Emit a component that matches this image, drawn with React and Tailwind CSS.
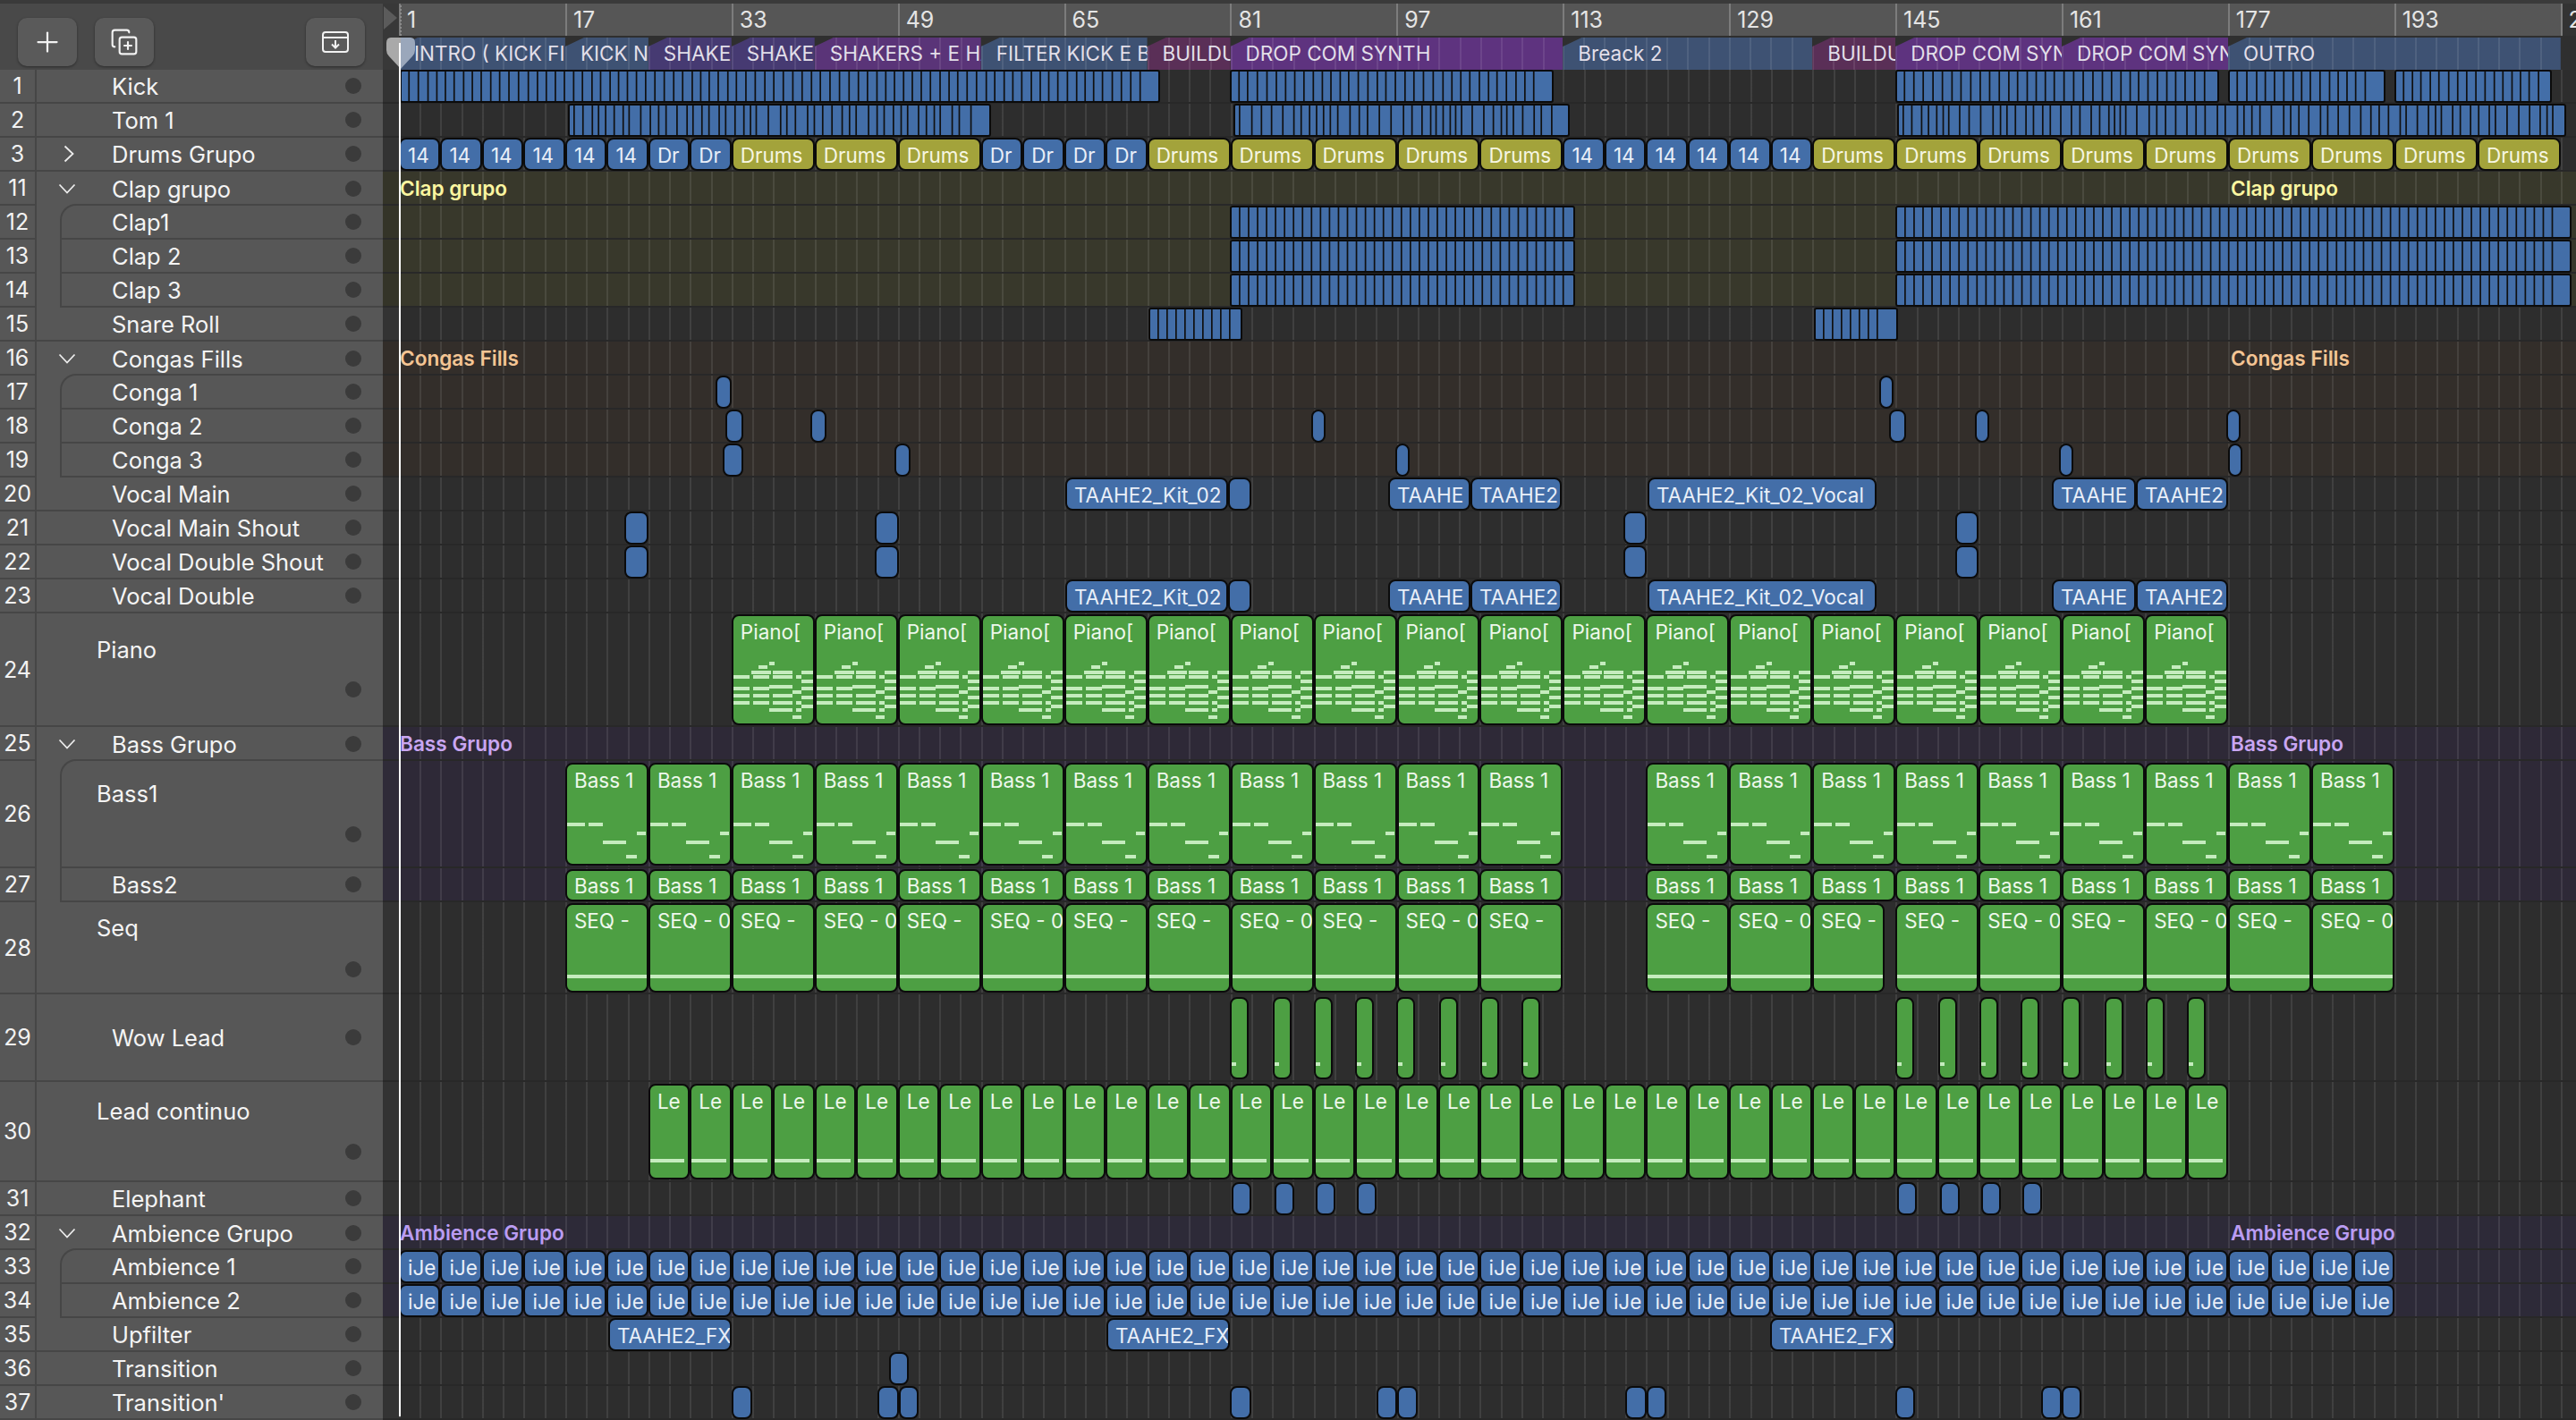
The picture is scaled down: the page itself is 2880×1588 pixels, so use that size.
import { CopyPlus, Plus } from 'lucide-react';

const BAR = 11.62;
const ORIGIN = 446;
const barX = (bar) => (bar - 1) * BAR;

const GRID =
  'bg-[repeating-linear-gradient(90deg,#ffffff17_0,#ffffff17_2px,transparent_2px,transparent_23.24px)]';

const BLUE = 'bg-[#436ea8] text-[#e9eff8]';
const GREEN = 'bg-[#4d9f43] text-[#eef8ec]';
const OLIVE = 'bg-[#a3a33b] text-[#f6f6e2]';

// seeded so the divider lines in the long clips stay the same between renders
function dividers(width, min, max, seed) {
  const out = [];
  let x = min;
  let s = seed;
  while (x < width - 14) {
    out.push(x);
    s = (s * 9301 + 49297) % 233280;
    x += min + (s / 233280) * (max - min);
  }
  return out;
}

const span = (x0, x1, label, color = BLUE, extra = {}) => ({ x0: x0 - ORIGIN, x1: x1 - ORIGIN, label, color, ...extra });
const bars = (bar, n, each, label, color = BLUE, extra = {}) =>
  Array.from({ length: n }, (_, i) => {
    const x = barX(bar + i * each);
    return { x0: x, x1: x + each * BAR, label, color, ...extra };
  });
const seg = (x0, x1, min, max, seed) => ({
  x0: x0 - ORIGIN,
  x1: x1 - ORIGIN,
  color: BLUE,
  radius: 'rounded-[3px]',
  ticks: dividers(x1 - x0, min, max, seed),
});

const PIANO_NOTES = [
  [42, 53, 6], [30, 57, 10], [22, 63, 22], [46, 63, 22], [78, 63, 14],
  [0, 68, 20], [24, 68, 18], [46, 68, 22], [72, 68, 6], [78, 73, 14],
  [42, 79, 26], [0, 81, 20], [24, 81, 18], [78, 81, 14], [68, 85, 10],
  [0, 89, 20], [24, 89, 18], [46, 89, 22], [78, 91, 14], [0, 97, 20],
  [24, 97, 18], [46, 97, 22], [72, 97, 6], [78, 101, 14], [42, 105, 26],
  [72, 105, 6], [68, 113, 10],
];
const BASS_NOTES = [[0, 67, 22], [26, 67, 16], [80, 77, 10], [42, 87, 26], [68, 103, 12]];

const taahe = [
  span(1191, 1373, 'TAAHE2_Kit_02'),
  span(1373, 1399),
  span(1552, 1644, 'TAAHE'),
  span(1644, 1746, 'TAAHE2'),
  span(1842, 2098, 'TAAHE2_Kit_02_Vocal'),
  span(2294, 2388, 'TAAHE'),
  span(2388, 2491, 'TAAHE2'),
];
const shouts = [span(698, 725), span(978, 1005), span(1815, 1841), span(2186, 2212)];
const clapRuns = [seg(1375, 1761, 10.05, 10.05, 1), seg(2119, 2875, 10.05, 10.05, 1)];
const wowStarts = [0, 48, 94, 140, 186, 234, 280, 326];
const seqLabels = ['SEQ -', 'SEQ - 0', 'SEQ -', 'SEQ - 0', 'SEQ -', 'SEQ - 0', 'SEQ -', 'SEQ -', 'SEQ - 0', 'SEQ -', 'SEQ - 0', 'SEQ -'];
const seqLabelsB = ['SEQ -', 'SEQ - 0'];
const seqLabelsC = ['SEQ -', 'SEQ - 0', 'SEQ -', 'SEQ - 0', 'SEQ -', 'SEQ - 0'];

const seqClips = [
  ...seqLabels.map((label, i) => bars(17 + i * 8, 1, 8, label, GREEN, { line: 'seq' })[0]),
  ...seqLabelsB.map((label, i) => bars(121 + i * 8, 1, 8, label, GREEN, { line: 'seq' })[0]),
  span(2026, 2107, 'SEQ -', GREEN, { line: 'seq' }),
  ...seqLabelsC.map((label, i) => bars(145 + i * 8, 1, 8, label, GREEN, { line: 'seq' })[0]),
];

const TRACKS = [
  { n: 1, name: 'Kick', clips: [seg(447, 1297, 9.4, 11, 11), seg(1375, 1737, 9.4, 11, 23), seg(2119, 2481, 9.4, 11, 37), seg(2491, 2667, 9.4, 11, 41), seg(2677, 2853, 9.4, 11, 53)] },
  { n: 2, name: 'Tom 1', clips: [seg(635, 1108, 6, 14, 7), seg(1379, 1755, 6, 14, 19), seg(2121, 2869, 6, 14, 31)] },
  {
    n: 3,
    name: 'Drums Grupo',
    chev: 'right',
    clips: [
      ...bars(1, 6, 4, '14'),
      ...bars(25, 2, 4, 'Dr'),
      ...bars(33, 3, 8, 'Drums', OLIVE),
      ...bars(57, 4, 4, 'Dr'),
      ...bars(73, 5, 8, 'Drums', OLIVE),
      ...bars(113, 6, 4, '14'),
      ...bars(137, 1, 8, 'Drums', OLIVE),
      ...bars(145, 8, 8, 'Drums', OLIVE),
    ],
  },
  { n: 11, name: 'Clap grupo', chev: 'down', open: true, tint: 'clap', title: 'Clap grupo', titleColor: 'text-[#fbf6a0]' },
  { n: 12, name: 'Clap1', child: true, first: true, tint: 'clap', clips: clapRuns },
  { n: 13, name: 'Clap 2', child: true, tint: 'clap', clips: clapRuns },
  { n: 14, name: 'Clap 3', child: true, tint: 'clap', clips: clapRuns },
  { n: 15, name: 'Snare Roll', clips: [seg(1284, 1389, 10, 10, 1), seg(2028, 2122, 10, 10, 1)] },
  { n: 16, name: 'Congas Fills', chev: 'down', open: true, tint: 'conga', title: 'Congas Fills', titleColor: 'text-[#f4c594]' },
  { n: 17, name: 'Conga 1', child: true, first: true, tint: 'conga', clips: [span(800, 818), span(2101, 2117)] },
  { n: 18, name: 'Conga 2', child: true, tint: 'conga', clips: [span(811, 831), span(906, 924), span(1466, 1482), span(2112, 2131), span(2208, 2224), span(2489, 2505)] },
  { n: 19, name: 'Conga 3', child: true, tint: 'conga', clips: [span(808, 831), span(1000, 1018), span(1560, 1576), span(2302, 2318), span(2491, 2507)] },
  { n: 20, name: 'Vocal Main', clips: taahe },
  { n: 21, name: 'Vocal Main Shout', clips: shouts },
  { n: 22, name: 'Vocal Double Shout', clips: shouts },
  { n: 23, name: 'Vocal Double', clips: taahe },
  {
    n: 24,
    name: 'Piano',
    h: 'h-[127px]',
    tall: { name: 'mt-[26px] pl-[67px]', dot: 'mt-[20px]' },
    clipY: 'top-[1px] bottom-0',
    clips: bars(33, 18, 8, 'Piano[', GREEN, { notes: PIANO_NOTES, topLabel: true }),
  },
  { n: 25, name: 'Bass Grupo', chev: 'down', open: true, tint: 'bass', title: 'Bass Grupo', titleColor: 'text-[#c9a6f2]' },
  {
    n: 26,
    name: 'Bass1',
    h: 'h-[120px]',
    child: true,
    first: true,
    tint: 'bass',
    tall: { name: 'mt-[22px] pl-[39px]', dot: 'mt-[21px]' },
    clipY: 'top-[2px] bottom-[1px]',
    clips: [
      ...bars(17, 12, 8, 'Bass 1', GREEN, { notes: BASS_NOTES, topLabel: true }),
      ...bars(121, 9, 8, 'Bass 1', GREEN, { notes: BASS_NOTES, topLabel: true }),
    ],
  },
  {
    n: 27,
    name: 'Bass2',
    child: true,
    tint: 'bass',
    clipY: 'top-[1px] bottom-[-1px]',
    clips: [...bars(17, 12, 8, 'Bass 1', GREEN), ...bars(121, 9, 8, 'Bass 1', GREEN)],
  },
  {
    n: 28,
    name: 'Seq',
    h: 'h-[103px]',
    tall: { name: 'mt-[14px] pl-[67px]', dot: 'mt-[22px]' },
    clipY: 'top-[1px] bottom-0',
    clips: seqClips,
  },
  {
    n: 29,
    name: 'Wow Lead',
    h: 'h-[98px]',
    clipY: 'top-[3px] bottom-[1px]',
    clips: [1375, 2119].flatMap((start) =>
      wowStarts.map((dx) => span(start + dx, start + dx + 21, undefined, GREEN, { line: 'wow' })),
    ),
  },
  {
    n: 30,
    name: 'Lead continuo',
    h: 'h-[112px]',
    tall: { name: 'mt-[18px] pl-[67px]', dot: 'mt-[21px]' },
    clipY: 'top-[2px] bottom-[1px]',
    clips: bars(25, 38, 4, 'Le', GREEN, { line: 'lead' }),
  },
  {
    n: 31,
    name: 'Elephant',
    clips: [1375, 2119].flatMap((start) => [0, 48, 94, 140].map((dx) => span(start + dx + 2, start + dx + 24))),
  },
  { n: 32, name: 'Ambience Grupo', chev: 'down', open: true, tint: 'amb', title: 'Ambience Grupo', titleColor: 'text-[#ba9cf2]' },
  { n: 33, name: 'Ambience 1', child: true, first: true, tint: 'amb', clips: bars(1, 48, 4, 'iJe') },
  { n: 34, name: 'Ambience 2', child: true, tint: 'amb', clips: bars(1, 48, 4, 'iJe') },
  { n: 35, name: 'Upfilter', clips: [span(680, 818, 'TAAHE2_FX'), span(1237, 1375, 'TAAHE2_FX'), span(1979, 2119, 'TAAHE2_FX')] },
  { n: 36, name: 'Transition', clips: [span(994, 1016)] },
  {
    n: 37,
    name: "Transition'",
    clips: [
      span(818, 841), span(981, 1005), span(1005, 1027), span(1375, 1399), span(1539, 1562), span(1562, 1585),
      span(1817, 1841), span(1841, 1863), span(2119, 2141), span(2282, 2305), span(2305, 2327),
    ],
  },
];

const TINTS = {
  clap: { lane: 'bg-[#38382b]', strip: 'bg-[#343428]' },
  conga: { lane: 'bg-[#332e2a]', strip: 'bg-[#322d29]' },
  bass: { lane: 'bg-[#2e2937]', strip: 'bg-[#2f2b38]' },
  amb: { lane: 'bg-[#2d2a38]', strip: 'bg-[#2f2b38]' },
};

const MARKERS = [
  [1, 17, 'INTRO ( KICK FILL', 'bg-[#3e5273]'],
  [17, 25, 'KICK N', 'bg-[#3e5273]'],
  [25, 33, 'SHAKERS', 'bg-[#463a72]'],
  [33, 41, 'SHAKE', 'bg-[#463a72]'],
  [41, 57, 'SHAKERS + E HAT', 'bg-[#5a3478]'],
  [57, 73, 'FILTER KICK E B', 'bg-[#3e5273]'],
  [73, 81, 'BUILDUP', 'bg-[#5a2f57]'],
  [81, 113, 'DROP COM SYNTH', 'bg-[#5e337f]'],
  [113, 137, 'Breack 2', 'bg-[#3e5273]'],
  [137, 145, 'BUILDUP', 'bg-[#5a2f57]'],
  [145, 161, 'DROP COM SYNTH', 'bg-[#5e337f]'],
  [161, 177, 'DROP COM SYNTH', 'bg-[#5e337f]'],
  [177, 209, 'OUTRO', 'bg-[#3e5273]'],
];

const RULER = [1, 17, 33, 49, 65, 81, 97, 113, 129, 145, 161, 177, 193];

function Chevron({ dir }) {
  if (dir === 'right') {
    return (
      <svg width="12" height="20" viewBox="0 0 12 20" fill="none" stroke="#ececec" strokeWidth="1.8" className="ml-[6px]">
        <path d="M1.5 1.5 L10.5 10 L1.5 18.5" />
      </svg>
    );
  }
  return (
    <svg width="20" height="12" viewBox="0 0 20 12" fill="none" stroke="#ececec" strokeWidth="1.8">
      <path d="M1.5 1.5 L10 10.5 L18.5 1.5" />
    </svg>
  );
}

function Dot({ className = '' }) {
  return <div className={`w-[18px] h-[18px] rounded-full bg-[#3b3b3b] shrink-0 mr-[24px] ${className}`} />;
}

function SidebarRow({ t }) {
  const mainBorder = t.open ? '' : 'border-b-2';
  return (
    <div className="flex h-full">
      <div className="w-[41px] shrink-0 flex items-center justify-center pt-[2px] border-r-2 border-b-2 border-[#464646] text-[25px] text-[#f2f2f2]">
        {t.n}
      </div>
      {t.child && <div className="w-[26px] shrink-0" />}
      <div
        className={`flex-1 min-w-0 flex border-[#464646] ${mainBorder} ${t.child ? 'border-l-2' : ''} ${
          t.first ? 'border-t-2 rounded-tl-[18px] -mt-[2px]' : ''
        } ${t.tall ? 'flex-col' : 'items-center'}`}
      >
        {t.tall ? (
          <>
            <div className={`text-[25.5px] leading-[30px] text-[#f4f4f4] ${t.tall.name}`}>{t.name}</div>
            <Dot className={`self-end ${t.tall.dot}`} />
          </>
        ) : (
          <>
            <div className={`shrink-0 flex items-center ${t.child ? 'w-[56px]' : 'w-[84px] pl-[24px]'}`}>
              {t.chev && <Chevron dir={t.chev} />}
            </div>
            <div className="text-[25.5px] leading-[30px] pt-[2px] text-[#f4f4f4] whitespace-nowrap">{t.name}</div>
            <Dot className="ml-auto" />
          </>
        )}
      </div>
    </div>
  );
}

function Clip({ c, y }) {
  const tallLabel = c.topLabel || c.line === 'seq' || c.line === 'lead';
  return (
    <div
      className={`absolute ${y} border-2 border-[#0b0b0b] overflow-hidden ${c.radius || 'rounded-lg'} ${c.color} text-[22.5px] whitespace-nowrap ${
        tallLabel ? 'pl-[8px] pt-[4px] leading-[28px]' : 'flex items-center pl-[8px] pt-[2px]'
      }`}
      style={{ left: c.x0, width: c.x1 - c.x0 }}
    >
      {c.ticks && (
        <svg className="absolute -left-[2px] top-0 w-full h-full" width="100%" height="100%">
          {c.ticks.map((x) => (
            <rect key={x} x={x} y="0" width="1.7" height="60" fill="#101010" />
          ))}
        </svg>
      )}
      {c.label}
      {c.notes && (
        <svg className="absolute -left-[2px] -top-[2px]" width="100" height="126">
          {c.notes.map(([x, ny, w]) => (
            <rect key={`${x}-${ny}`} x={x} y={ny} width={w} height="4" fill="#c5ecbe" />
          ))}
        </svg>
      )}
      {c.line === 'seq' && <div className="mt-[46px] -ml-[8px] h-[4px] bg-[#c5ecbe]" />}
      {c.line === 'lead' && <div className="mt-[50px] -ml-[8px] mr-[4px] h-[4px] bg-[#c5ecbe]" />}
      {c.line === 'wow' && <div className="absolute left-0 top-[71px] w-[5px] h-[4px] bg-[#c5ecbe]" />}
    </div>
  );
}

function Track({ t }) {
  const tint = t.tint ? TINTS[t.tint] : { lane: 'bg-[#2d2d2d]', strip: 'bg-[#333333]' };
  const y = t.clipY || 'top-0 bottom-[-1px]';
  return (
    <div className={`flex ${t.h || 'h-[38px]'}`}>
      <div className="w-[428px] shrink-0 bg-[#575757]">
        <SidebarRow t={t} />
      </div>
      <div className={`w-[18px] shrink-0 border-b-2 border-[#292929] ${tint.strip}`} />
      <div className={`relative flex-1 border-b-2 border-[#282828] ${tint.lane} ${GRID}`}>
        {t.title && (
          <>
            <div className={`absolute left-[1px] inset-y-0 flex items-center pt-[2px] text-[22.6px] font-semibold ${t.titleColor}`}>{t.title}</div>
            <div className={`absolute left-[2048px] inset-y-0 flex items-center pt-[2px] text-[22.6px] font-semibold ${t.titleColor}`}>{t.title}</div>
          </>
        )}
        {t.clips && t.clips.map((c, i) => <Clip key={i} c={c} y={y} />)}
      </div>
    </div>
  );
}

function HeadButton({ children, className = '' }) {
  return (
    <button className={`w-[66px] h-[54px] rounded-[10px] bg-[#5a5a5a] shadow-[0_1px_3px_#00000066] flex items-center justify-center text-[#f2f2f2] ${className}`}>
      {children}
    </button>
  );
}

export default function App() {
  return (
    <div className="relative w-[2880px] h-[1588px] overflow-hidden bg-[#2d2d2d] font-['Inter',sans-serif]">
      <div className="h-[4px] bg-[#3a3a3a]" />
      <div className="flex h-[74px]">
        <div className="w-[428px] shrink-0 bg-[#494949] flex items-start pt-[16px] pl-[20px] pr-[20px] gap-[20px] shadow-[0_2px_3px_#00000055]">
          <HeadButton>
            <Plus size={36} strokeWidth={1.5} />
          </HeadButton>
          <HeadButton>
            <CopyPlus size={32} strokeWidth={1.6} />
          </HeadButton>
          <HeadButton className="ml-auto">
            <svg width="32" height="26" viewBox="0 0 32 26" fill="none" stroke="#f2f2f2" strokeWidth="2">
              <rect x="2" y="2" width="28" height="22" rx="3" />
              <path d="M2 8 H30 M16 11 V19 M12 15.5 L16 19.5 L20 15.5" />
            </svg>
          </HeadButton>
        </div>
        <div className="w-[18px] shrink-0 bg-[#383838]" />
        <div className="flex-1 min-w-0 flex flex-col">
          <div className="h-[36px] flex overflow-hidden bg-[#333333] text-[25px] leading-[36px] text-[#e4e4e4]">
            {RULER.map((n) => (
              <div key={n} className="w-[185.9px] shrink-0 bg-[#565656] border-l-2 border-[#7c7c7c] pl-[7px]">
                {n}
              </div>
            ))}
            <div className="shrink-0 pl-[7px] border-l-2 border-[#7c7c7c]">209</div>
          </div>
          <div className="h-[38px] flex bg-[#2f2f2f] pt-[2px]">
            {MARKERS.map(([a, b, label, color], i) => (
              <div
                key={i}
                className={`shrink-0 overflow-hidden whitespace-nowrap pl-[17px] text-[22.5px] leading-[36px] text-[#e2dfe9] [clip-path:polygon(21px_0,100%_0,100%_100%,0_100%,0_10px)] ${color} ${GRID}`}
                style={{ width: (b - a) * BAR }}
              >
                {label}
              </div>
            ))}
          </div>
        </div>
      </div>

      {TRACKS.map((t) => (
        <Track key={t.n} t={t} />
      ))}

      {/* cycle arrow and playhead sit over the ruler and the lanes */}
      <svg className="absolute left-[429px] top-[7px]" width="16" height="26" viewBox="0 0 16 26">
        <path d="M0 0 L15 13 L0 26 Z" fill="#5b5b5b" />
      </svg>
      <div className="absolute left-[447px] top-[6px] h-[34px] border-l-2 border-dotted border-[#8a8a8a]" />
      <svg className="absolute left-[431px] top-[42px]" width="34" height="36" viewBox="0 0 34 36">
        <path d="M17 0 H6 Q1 0 1 6 V14 Q1 18 4 21 L17 35 Z" fill="#a9a9a9" />
        <path d="M17 0 H28 Q33 0 33 6 V14 Q33 18 30 21 L17 35 Z" fill="#9aa7bb" />
      </svg>
      <div className="absolute left-[446px] top-[48px] w-[2px] h-[1536px] bg-white" />
    </div>
  );
}
